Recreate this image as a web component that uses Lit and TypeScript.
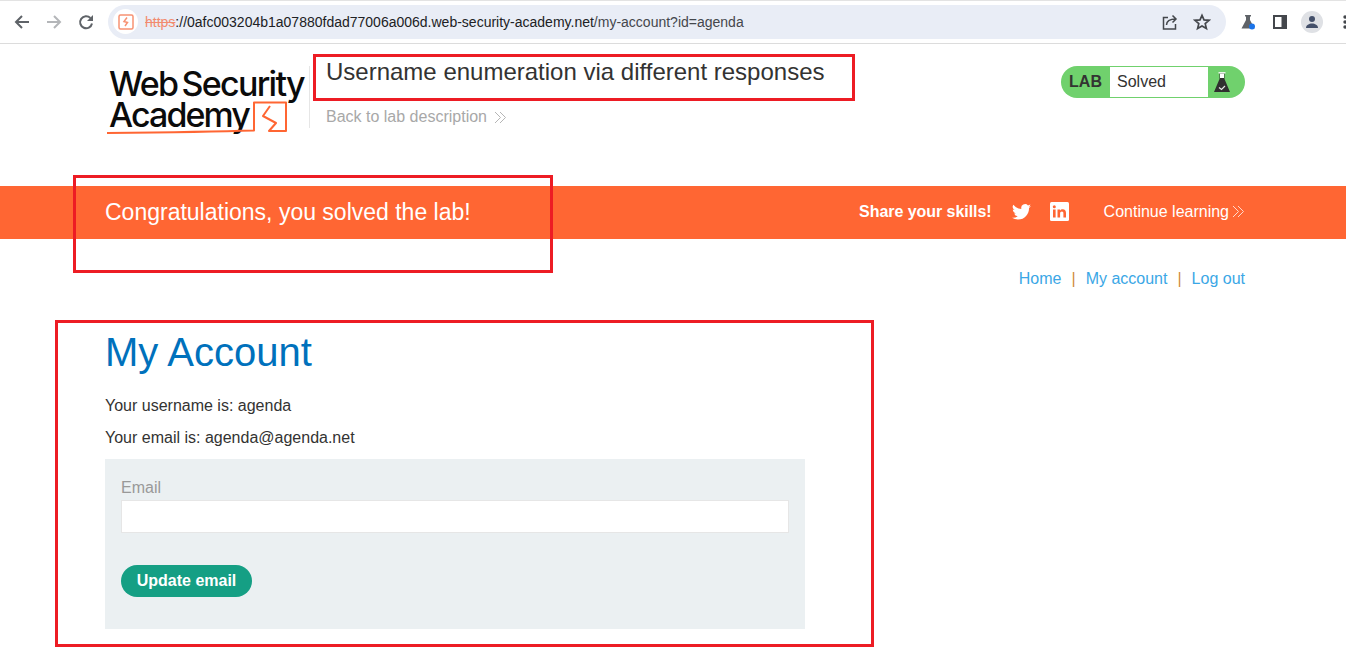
import { LitElement, html, css, svg } from "lit";
import { customElement } from "lit/decorators.js";

const dbl = (c: string) => svg`<svg class="dbl" width="13" height="13" viewBox="0 0 13 13" fill="none" stroke="${c}" stroke-width="1"><path d="M1 1l5.500 5.500L1 12M6 1l5.500 5.500L6 12"/></svg>`;

@customElement("app-root")
export class AppRoot extends LitElement {
  static styles = css`
    :host { display: block; position: relative; width: 1346px; height: 652px; overflow: hidden; background: #fff;
      font-family: "Liberation Sans", Arial, sans-serif; color: #333332; font-size: 16px; }
    * { box-sizing: border-box; }
    .chrome { height: 44px; border-top: 1px solid #e3e3e3; border-bottom: 1px solid #dcdcdc; display: flex; align-items: center; padding-left: 13px; }
    .nav { display: flex; gap: 14px; align-items: center; width: 95px; flex: none; }
    .nav svg { display: block; flex: none; }
    .omni { width: 1118px; height: 34px; flex: none; border-radius: 17px; background: #e9edf6; display: flex; align-items: center; padding-left: 5px; font-size: 14px; color: #202124; margin-top: -1px; }
    .site { width: 25px; height: 25px; border-radius: 50%; background: #fff; display: flex; align-items: center; justify-content: center; margin-right: 7px; flex: none; }
    .https { color: #f28b6f; text-decoration: line-through; }
    .url-muted { color: #44474c; }
    .omni-right { margin-left: auto; display: flex; gap: 15px; align-items: center; padding-right: 15px; }
    .omni-right svg { display: block; }
    .ext { display: flex; align-items: center; margin-left: 14px; flex: none; }
    .panel { margin-left: 17px; }
    .avatar { margin-left: 14px; width: 22px; height: 22px; border-radius: 50%; background: #dfe1e5; display: flex; align-items: center; justify-content: center; }
    .dots { margin-left: 20px; flex: none; }

    .head { height: 142px; padding: 22px 101px 0 107px; display: flex; position: relative; }
    .logo { width: 202px; height: 72px; position: relative; flex: none; color: #0b0b0b; font-family: Inter, "Liberation Sans", sans-serif; font-weight: 500; padding: 2px 0 0 2px; }
    .logo-l1, .logo-l2 { display: block; font-size: 34px; line-height: 31px; white-space: nowrap; }
    .logo-l1 { letter-spacing: -1.72px; word-spacing: -3px; }
    .logo-l2 { letter-spacing: -1.9px; }
    .logo svg { position: absolute; left: 0; top: 0; }
    .title-col { border-left: 1px solid #e6e6e6; padding-left: 16px; height: 62px; }
    .title { font-size: 24px; line-height: 28px; margin: -8px 0 0 0; font-weight: 400; white-space: nowrap; }
    .back { margin-top: 21px; color: #a8a8a8; display: flex; align-items: center; gap: 7px; line-height: 20px; }
    .badge { margin-left: auto; width: 184px; height: 32px; border-radius: 16px; background: #70d16d; display: flex; align-items: center; overflow: hidden; }
    .lab { width: 49px; text-align: center; font-weight: 700; font-size: 16px; color: #333332; }
    .solved { width: 98px; height: 30px; background: #fff; line-height: 29px; padding-left: 7px; color: #333332; }
    .flask { flex: 1; display: flex; justify-content: center; padding-right: 9px; }
    .flask svg { display: block; }

    .banner { height: 53px; background: #ff6633; color: #fff; display: flex; align-items: center; padding: 0 101px 2px 105px; }
    .congrats { font-size: 23px; margin-top: 2px; }
    .share { margin-left: auto; font-weight: 700; font-size: 16px; letter-spacing: -0.05px; }
    .tw { margin-left: 20px; display: block; }
    .li { margin-left: 19px; display: block; }
    .cont { margin-left: 35px; display: flex; align-items: center; gap: 3px; }

    .links { display: flex; justify-content: flex-end; padding: 30px 101px 0 0; line-height: 20px; color: #3ba7e6; }
    .links i { font-style: normal; color: #d08a3a; margin: 0 10px; }

    main { padding: 0 0 0 105px; }
    h1 { margin: 39px 0 0; font-size: 40px; line-height: 48px; font-weight: 400; color: #0071bc; }
    p { margin: 0; line-height: 20px; }
    .p1 { margin-top: 20px; }
    .p2 { margin-top: 12px; }
    .form { margin-top: 11px; width: 700px; height: 170px; background: #ebf0f2; padding: 19px 16px 0; }
    label { display: block; color: #999; line-height: 19px; height: 22px; }
    .input { width: 668px; height: 33px; background: #fff; border: 1px solid #e6e6e6; }
    .btn { margin-top: 32px; width: 131px; height: 32px; border-radius: 16px; background: #159f84; color: #fff; font-weight: 700; font-size: 16px; display: flex; align-items: center; justify-content: center; }

    .ann { position: absolute; border: 3px solid #ed1c24; pointer-events: none; }
    .a1 { left: 313px; top: 54px; width: 542px; height: 47px; }
    .a2 { left: 73px; top: 175px; width: 480px; height: 98px; }
    .a3 { left: 55px; top: 320px; width: 819px; height: 327px; }
  `;

  render() {
    return html`
      <div class="chrome">
        <div class="nav">
          <svg width="18" height="18" viewBox="0 0 18 18" fill="none" stroke="#5f6368" stroke-width="2"><path d="M16 9H3M9 3L3 9l6 6"/></svg>
          <svg width="18" height="18" viewBox="0 0 18 18" fill="none" stroke="#b4b6b9" stroke-width="2"><path d="M2 9h13M9 3l6 6-6 6"/></svg>
          <svg width="18" height="18" viewBox="0 0 18 18" fill="none" stroke="#5f6368" stroke-width="2"><path d="M15 10.500A6 6 0 1 1 13.400 5"/><path d="M16 2v6h-6z" fill="#5f6368" stroke="none"/></svg>
        </div>
        <div class="omni">
          <span class="site"><svg width="16" height="16" viewBox="0 0 16 16" fill="none" stroke="#f79273" stroke-width="1.500"><rect x="1" y="1" width="14" height="14" rx="1.500"/><path d="M9 3.500L6 7.500l3.500 1L7 12"/></svg></span>
          <span><span class="https">https</span>://0afc003204b1a07880fdad77006a006d.web-security-academy.net<span class="url-muted">/my-account?id=agenda</span></span>
          <span class="omni-right">
            <svg width="16" height="16" viewBox="0 0 16 16" fill="none" stroke="#44474c" stroke-width="1.500"><path d="M13.500 10v5H1.500V3.500h4.500"/><path d="M4.500 11c0-4 3-6 9.500-6M10.500 1.500L14 5l-3.500 3.500"/></svg>
            <svg width="18" height="18" viewBox="0 0 18 18" fill="none" stroke="#44474c" stroke-width="1.700"><path d="M9 2.300l2 4.600 5 .4-3.800 3.300 1.200 4.900L9 12.900l-4.400 2.600 1.200-4.900L2 7.300l5-.4z"/></svg>
          </span>
        </div>
        <div class="ext">
          <svg width="16" height="16" viewBox="0 0 16 16"><path d="M5 1h6v1.500h-1V6l4.500 8.500H1.500L6 6V2.500H5z" fill="#5f6368"/><circle cx="12" cy="12.500" r="3" fill="#1a73e8"/></svg>
          <svg class="panel" width="14" height="14" viewBox="0 0 14 14"><rect width="14" height="14" fill="#44474c"/><rect x="2" y="2" width="6.500" height="10" fill="#fff"/></svg>
          <span class="avatar"><svg width="14" height="14" viewBox="0 0 14 14" fill="#44506a"><circle cx="7" cy="4" r="3"/><path d="M1 13c0-3 3-4.500 6-4.500s6 1.500 6 4.500z"/></svg></span>
          <svg class="dots" width="4" height="14" viewBox="0 0 4 14" fill="#44474c"><circle cx="2" cy="2" r="1.700"/><circle cx="2" cy="7" r="1.700"/><circle cx="2" cy="12" r="1.700"/></svg>
        </div>
      </div>

      <div class="head">
        <div class="logo">
          <span class="logo-l1">Web Security</span>
          <span class="logo-l2">Academy</span>
          <svg width="202" height="72" viewBox="0 0 202 72" fill="none" stroke="#ff6633" stroke-linejoin="round"><path d="M0 67C50 66.500 100 66 147 64.500V36.500h32V65h-17l7-8-13-7 7-10" stroke-width="2"/></svg>
        </div>
        <div class="title-col">
          <h2 class="title">Username enumeration via different responses</h2>
          <div class="back">Back to lab description ${dbl("#b5b5b5")}</div>
        </div>
        <div class="badge">
          <span class="lab">LAB</span>
          <span class="solved">Solved</span>
          <span class="flask"><svg width="16" height="21" viewBox="0 0 16 21"><path d="M5.500 1h5v6l5.500 13H0L5.500 7z" fill="#2f2f2f"/><rect x="6" y="1.500" width="4" height="4.500" fill="#fff"/><rect x="4.500" y="0" width="7" height="1.500" fill="#e8f5e8"/><path d="M5 15.500l2.500 2 3.500-3.500" fill="none" stroke="#e5e5e5" stroke-width="1.200"/></svg></span>
        </div>
      </div>

      <div class="banner">
        <span class="congrats">Congratulations, you solved the lab!</span>
        <span class="share">Share your skills!</span>
        <svg class="tw" width="19" height="16" viewBox="0 0 24 20" fill="#fff"><path d="M24 2.400a9.800 9.800 0 0 1-2.800.8A5 5 0 0 0 23.300.5a9.900 9.900 0 0 1-3.100 1.200 4.900 4.900 0 0 0-8.400 4.500A14 14 0 0 1 1.700.9a4.900 4.900 0 0 0 1.500 6.600 4.900 4.900 0 0 1-2.200-.6c0 2.400 1.700 4.400 3.900 4.900a4.900 4.900 0 0 1-2.200.1 4.900 4.900 0 0 0 4.600 3.400A9.900 9.900 0 0 1 0 17.300 14 14 0 0 0 7.500 19.500c9.100 0 14.300-7.700 14-14.600A10 10 0 0 0 24 2.400z"/></svg>
        <svg class="li" width="19" height="19" viewBox="0 0 19 19"><rect width="19" height="19" rx="1.500" fill="#fff"/><rect x="3" y="7.500" width="2.600" height="8" fill="#ff6633"/><circle cx="4.300" cy="4.700" r="1.500" fill="#ff6633"/><path d="M7.500 7.500H10v1.200c.6-.9 1.500-1.400 2.700-1.400 2.200 0 3.300 1.300 3.300 3.800v4.400h-2.600v-4.100c0-1.200-.5-1.900-1.500-1.900s-1.800.7-1.800 1.900v4.100H7.500z" fill="#ff6633"/></svg>
        <span class="cont">Continue learning ${dbl("#ffd9cc")}</span>
      </div>

      <div class="links">
        <span>Home</span><i>|</i><span>My account</span><i>|</i><span>Log out</span>
      </div>

      <main>
        <h1>My Account</h1>
        <p class="p1">Your username is: agenda</p>
        <p class="p2">Your email is: agenda@agenda.net</p>
        <div class="form">
          <label>Email</label>
          <div class="input"></div>
          <div class="btn">Update email</div>
        </div>
      </main>

      <div class="ann a1"></div>
      <div class="ann a2"></div>
      <div class="ann a3"></div>
    `;
  }
}
